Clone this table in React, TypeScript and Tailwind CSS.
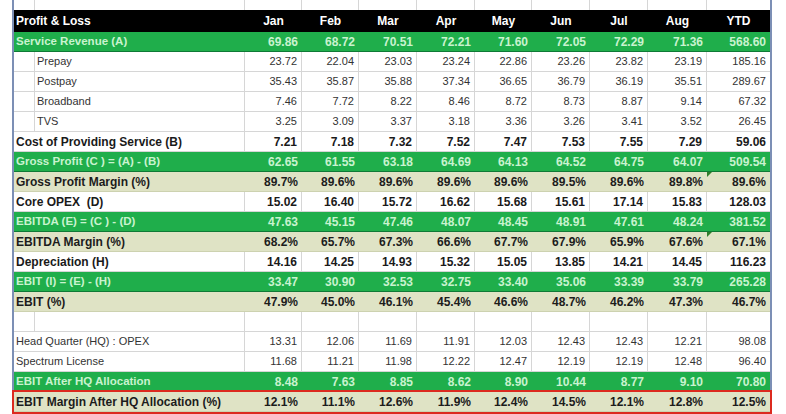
import React from 'react';

type Kind = 'green' | 'tan' | 'bold' | 'plain' | 'indent' | 'empty';

interface Row {
  label: string;
  kind: Kind;
  values: string[];
  flag?: boolean; // little excel error triangle on YTD cell
  last?: boolean;
}

const months = ['Jan', 'Feb', 'Mar', 'Apr', 'May', 'Jun', 'Jul', 'Aug', 'YTD'];

const rows: Row[] = [
  { label: 'Service Revenue (A)', kind: 'green', values: ['69.86', '68.72', '70.51', '72.21', '71.60', '72.05', '72.29', '71.36', '568.60'] },
  { label: 'Prepay', kind: 'indent', values: ['23.72', '22.04', '23.03', '23.24', '22.86', '23.26', '23.82', '23.19', '185.16'] },
  { label: 'Postpay', kind: 'indent', values: ['35.43', '35.87', '35.88', '37.34', '36.65', '36.79', '36.19', '35.51', '289.67'] },
  { label: 'Broadband', kind: 'indent', values: ['7.46', '7.72', '8.22', '8.46', '8.72', '8.73', '8.87', '9.14', '67.32'] },
  { label: 'TVS', kind: 'indent', values: ['3.25', '3.09', '3.37', '3.18', '3.36', '3.26', '3.41', '3.52', '26.45'] },
  { label: 'Cost of Providing Service (B)', kind: 'bold', values: ['7.21', '7.18', '7.32', '7.52', '7.47', '7.53', '7.55', '7.29', '59.06'] },
  { label: 'Gross Profit (C ) = (A) - (B)', kind: 'green', values: ['62.65', '61.55', '63.18', '64.69', '64.13', '64.52', '64.75', '64.07', '509.54'] },
  { label: 'Gross Profit Margin (%)', kind: 'tan', flag: true, values: ['89.7%', '89.6%', '89.6%', '89.6%', '89.6%', '89.5%', '89.6%', '89.8%', '89.6%'] },
  { label: 'Core OPEX  (D)', kind: 'bold', values: ['15.02', '16.40', '15.72', '16.62', '15.68', '15.61', '17.14', '15.83', '128.03'] },
  { label: 'EBITDA (E) = (C ) - (D)', kind: 'green', values: ['47.63', '45.15', '47.46', '48.07', '48.45', '48.91', '47.61', '48.24', '381.52'] },
  { label: 'EBITDA Margin (%)', kind: 'tan', flag: true, values: ['68.2%', '65.7%', '67.3%', '66.6%', '67.7%', '67.9%', '65.9%', '67.6%', '67.1%'] },
  { label: 'Depreciation (H)', kind: 'bold', values: ['14.16', '14.25', '14.93', '15.32', '15.05', '13.85', '14.21', '14.45', '116.23'] },
  { label: 'EBIT (I) = (E) - (H)', kind: 'green', values: ['33.47', '30.90', '32.53', '32.75', '33.40', '35.06', '33.39', '33.79', '265.28'] },
  { label: 'EBIT (%)', kind: 'tan', values: ['47.9%', '45.0%', '46.1%', '45.4%', '46.6%', '48.7%', '46.2%', '47.3%', '46.7%'] },
  { label: '', kind: 'empty', values: ['', '', '', '', '', '', '', '', ''] },
  { label: 'Head Quarter (HQ) : OPEX', kind: 'plain', values: ['13.31', '12.06', '11.69', '11.91', '12.03', '12.43', '12.43', '12.21', '98.08'] },
  { label: 'Spectrum License', kind: 'plain', values: ['11.68', '11.21', '11.98', '12.22', '12.47', '12.19', '12.19', '12.48', '96.40'] },
  { label: 'EBIT After HQ Allocation', kind: 'green', values: ['8.48', '7.63', '8.85', '8.62', '8.90', '10.44', '8.77', '9.10', '70.80'] },
  { label: 'EBIT Margin After HQ Allocation (%)', kind: 'tan', last: true, values: ['12.1%', '11.1%', '12.6%', '11.9%', '12.4%', '14.5%', '12.1%', '12.8%', '12.5%'] },
];

const grid = 'grid grid-cols-[21px_210px_57px_57px_58px_58px_57px_58px_58px_59px_63px]';

const rowStyle: Record<Kind, string> = {
  green: 'h-[20px] bg-[#1fae4b] text-[#c9f3cf] font-bold border-b border-[#0f7a36]',
  tan: 'h-[20px] bg-[#dfe3c5] text-[#1c1c1c] font-bold border-b border-[#cdd2b0]',
  bold: 'h-[20px] bg-white text-[#1a1a1a] font-bold border-b border-[#d6d6d6]',
  plain: 'h-[20px] bg-white text-[#333] border-b border-[#d6d6d6]',
  indent: 'h-[20px] bg-white text-[#333] border-b border-[#d6d6d6]',
  empty: 'h-[20px] bg-white border-b border-[#d6d6d6]',
};

const gridLines = (k: Kind) => k === 'bold' || k === 'plain' || k === 'indent' || k === 'empty';

const TableRow = ({ row }: { row: Row }) => {
  const lines = gridLines(row.kind);
  const valueSize = row.kind === 'plain' || row.kind === 'indent' ? 'text-[11px]' : 'text-[12px]';
  const labelSize =
    row.kind === 'plain' || row.kind === 'indent' ? 'text-[11px]' : row.kind === 'green' ? 'text-[11.5px]' : 'text-[12px]';
  return (
    <div className={`${grid} ${rowStyle[row.kind]} ${row.last ? 'outline-2 outline-[#dc2a1f]' : ''}`}>
      {row.kind === 'indent' || row.kind === 'empty' ? (
        <>
          <div className="border-r border-[#d6d6d6]" />
          <div className={`flex items-center pl-[2px] whitespace-pre ${labelSize} ${lines ? 'border-r border-[#d6d6d6]' : ''}`}>
            {row.label}
          </div>
        </>
      ) : (
        <div className={`col-span-2 flex items-center pl-[2px] whitespace-pre ${labelSize} ${lines ? 'border-r border-[#d6d6d6]' : ''}`}>
          {row.label}
        </div>
      )}
      {row.values.map((v, i) => (
        <div
          key={i}
          className={`relative flex items-center justify-end pr-[4px] ${valueSize} ${lines && i < 8 ? 'border-r border-[#d6d6d6]' : ''}`}
        >
          {row.flag && i === 8 && (
            <span className="absolute left-0 top-0 h-0 w-0 border-t-[5px] border-r-[5px] border-t-[#2f7d2a] border-r-transparent" />
          )}
          {v}
        </div>
      ))}
    </div>
  );
};

export default function App() {
  return (
    <div className="w-[786px] h-[414px] overflow-hidden bg-white pl-[12px]" style={{ fontFamily: '"Liberation Sans", Arial, sans-serif' }}>
      <div className="w-[760px] border-l-2 border-r-2 border-[#7c8fb5]">
        {/* partial row above the header */}
        <div className={`${grid} h-[10px]`}>
          <div className="border-r border-[#d6d6d6]" />
          <div className="border-r border-[#d6d6d6]" />
          {months.map((m, i) => (
            <div key={m} className={i < 8 ? 'border-r border-[#d6d6d6]' : ''} />
          ))}
        </div>

        {/* header */}
        <div className={`${grid} h-[22px] bg-black text-white font-bold text-[12px]`}>
          <div className="col-span-2 flex items-center pl-[2px]">Profit &amp; Loss</div>
          {months.map((m) => (
            <div key={m} className="flex items-center justify-center">
              {m}
            </div>
          ))}
        </div>

        {rows.map((r, i) => (
          <TableRow key={i} row={r} />
        ))}
      </div>
    </div>
  );
}
